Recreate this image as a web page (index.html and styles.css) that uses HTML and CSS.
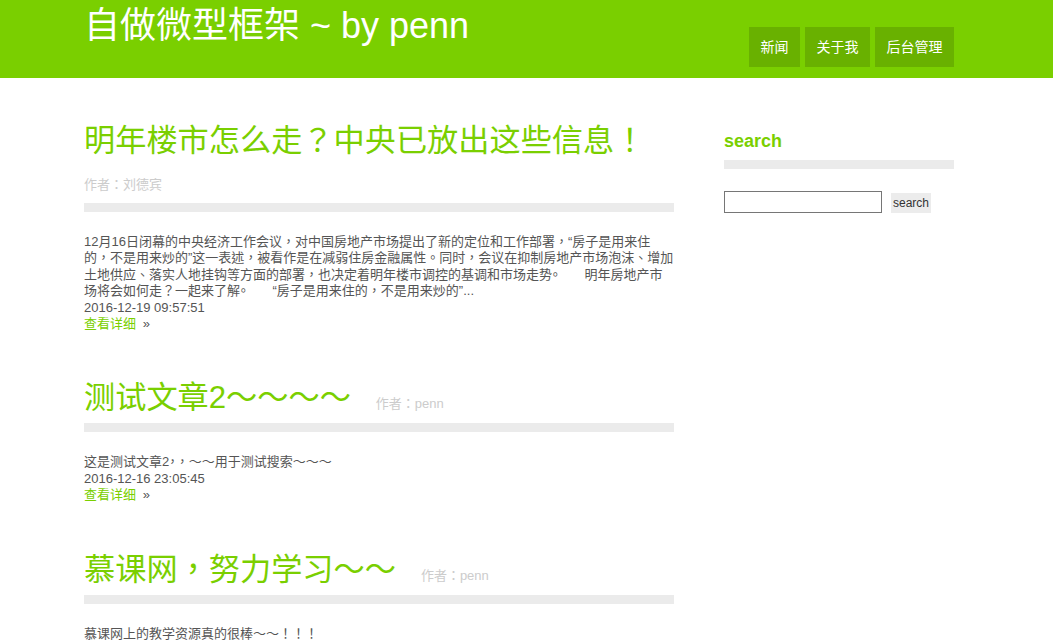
FILE: index.html
```html
<!DOCTYPE html>
<html lang="zh-CN">
<head>
<meta charset="utf-8">
<title>自做微型框架 ~ by penn</title>
<link rel="stylesheet" href="styles.css">
</head>
<body>
<header class="top">
  <div class="wrap top-inner">
    <h1 class="logo">自做微型框架 ~ by penn</h1>
    <nav class="nav">
      <a class="nav-item" href="#">新闻</a>
      <a class="nav-item" href="#">关于我</a>
      <a class="nav-item" href="#">后台管理</a>
    </nav>
  </div>
</header>
<div class="wrap main">
  <div class="posts">
    <article class="post">
      <div class="post-head">
        <h2 class="post-title">明年楼市怎么走？中央已放出这些信息！</h2>
        <span class="author">作者：刘德宾</span>
      </div>
      <div class="bar"></div>
      <div class="post-body">
        <p class="excerpt">12月16日闭幕的中央经济工作会议，对中国房地产市场提出了新的定位和工作部署，“房子是用来住的，不是用来炒的”这一表述，被看作是在减弱住房金融属性。同时，会议在抑制房地产市场泡沫、增加土地供应、落实人地挂钩等方面的部署，也决定着明年楼市调控的基调和市场走势。　　明年房地产市场将会如何走？一起来了解。　　“房子是用来住的，不是用来炒的”...</p>
        <div class="date">2016-12-19 09:57:51</div>
        <div class="more"><a href="#">查看详细</a> <span class="raquo">»</span></div>
      </div>
    </article>
    <article class="post">
      <div class="post-head">
        <h2 class="post-title">测试文章2～～～～</h2>
        <span class="author">作者：penn</span>
      </div>
      <div class="bar"></div>
      <div class="post-body">
        <p class="excerpt">这是测试文章2，，～～用于测试搜索～～～</p>
        <div class="date">2016-12-16 23:05:45</div>
        <div class="more"><a href="#">查看详细</a> <span class="raquo">»</span></div>
      </div>
    </article>
    <article class="post">
      <div class="post-head">
        <h2 class="post-title">慕课网，努力学习～～</h2>
        <span class="author">作者：penn</span>
      </div>
      <div class="bar"></div>
      <div class="post-body">
        <p class="excerpt">慕课网上的教学资源真的很棒～～！！！</p>
      </div>
    </article>
  </div>
  <aside class="side">
    <h3 class="side-title">search</h3>
    <div class="bar"></div>
    <form class="search">
      <input class="search-input" type="text">
      <button class="search-btn" type="button">search</button>
    </form>
  </aside>
</div>
</body>
</html>
```
FILE: styles.css
```css
html, body {
  margin: 0;
  padding: 0;
  background: #fff;
  font-family: "Liberation Sans", "Noto Sans CJK TC", sans-serif;
  font-feature-settings: "locl" 0;
  color: #555;
  overflow: hidden;
}

.wrap {
  width: 870px;
  margin-left: 84px;
}

.top {
  background: #7acf00;
  height: 78px;
}

.top-inner {
  display: flex;
  justify-content: space-between;
  align-items: flex-start;
}

.logo {
  margin: 0;
  padding-top: 6px;
  font-size: 36px;
  font-weight: normal;
  line-height: 40px;
  color: #fff;
}

.nav {
  display: flex;
  gap: 5px;
  margin-top: 27px;
}

.nav-item {
  display: block;
  height: 40px;
  line-height: 40px;
  padding: 0 11.5px;
  background: #69b100;
  color: #fff;
  font-size: 14px;
  text-decoration: none;
}

.main {
  display: flex;
  gap: 50px;
  padding-top: 44px;
}

.posts {
  width: 590px;
}

.post {
  margin-bottom: 47px;
}

.post-head {
  display: flex;
  flex-wrap: wrap;
  align-items: baseline;
  column-gap: 25px;
  row-gap: 13px;
}

.post-title {
  margin: 0;
  font-size: 31.2px;
  font-weight: normal;
  line-height: 38px;
  color: #7acf00;
}

.author {
  font-size: 13px;
  line-height: 24px;
  color: #ccc;
}

.bar {
  height: 9px;
  background: #ebebeb;
  margin-top: 6px;
}

.post-body {
  margin-top: 22px;
  font-size: 13px;
  line-height: 16.4px;
}

.excerpt {
  margin: 0;
}

.more a {
  color: #7acf00;
  text-decoration: none;
}

.raquo {
  margin-left: 3px;
  color: #555;
}

.side {
  width: 230px;
}

.side-title {
  margin: 0;
  font-size: 18px;
  line-height: 30px;
  font-weight: bold;
  color: #7acf00;
  margin-top: 4px;
}

.side .bar {
  margin-top: 4px;
}

.search {
  display: flex;
  align-items: flex-start;
  margin-top: 22px;
}

.search-input {
  box-sizing: border-box;
  width: 158px;
  height: 22px;
  margin: 0;
  padding: 1px 2px;
  border: 1px solid #767676;
  border-radius: 0;
  font-size: 12px;
}

.search-btn {
  margin: 2px 0 0 9px;
  height: 20px;
  padding: 0 2px;
  border: none;
  background: #ececec;
  color: #333;
  font-family: "Liberation Sans", sans-serif;
  font-size: 12px;
  line-height: 20px;
}
```
